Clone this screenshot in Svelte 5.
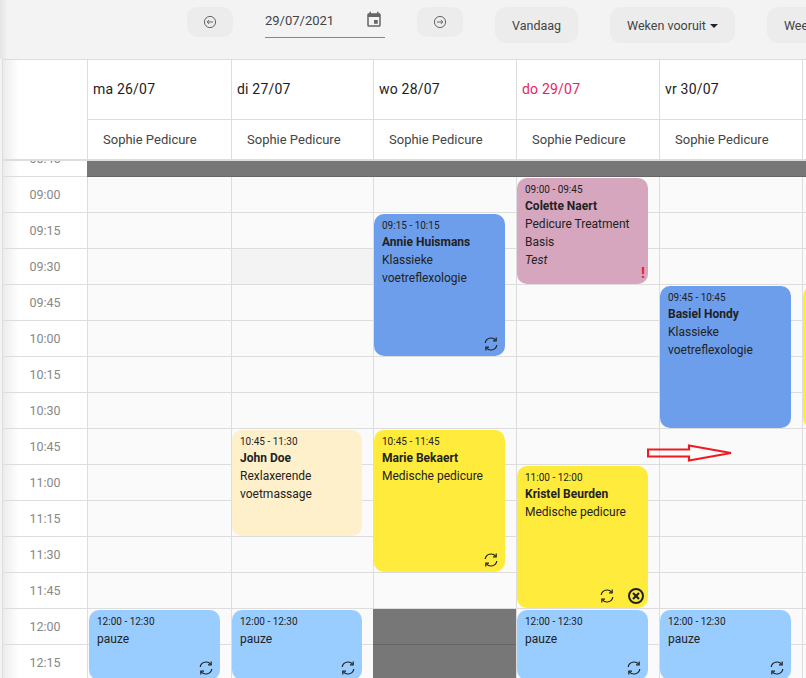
<script lang="ts">
  const times = ["08:45","09:00","09:15","09:30","09:45","10:00","10:15","10:30","10:45","11:00","11:15","11:30","11:45","12:00","12:15"];
  const rowH = 36;

  const pauze = () => ({ from: 13, span: 2, time: "12:00 - 12:30", lines: ["pauze"], color: "#99ccff", sync: true });

  const days = [
    { label: "ma 26/07", res: "Sophie Pedicure", events: [pauze()], blocked: [0] },
    {
      label: "di 27/07",
      res: "Sophie Pedicure",
      blocked: [0],
      light: [3],
      events: [
        { from: 8, span: 3, time: "10:45 - 11:30", name: "John Doe", lines: ["Rexlaxerende", "voetmassage"], color: "#fff0cc" },
        pauze(),
      ],
    },
    {
      label: "wo 28/07",
      res: "Sophie Pedicure",
      blocked: [0, 13, 14],
      events: [
        { from: 2, span: 4, time: "09:15 - 10:15", name: "Annie Huismans", lines: ["Klassieke", "voetreflexologie"], color: "#6d9eeb", sync: true },
        { from: 8, span: 4, time: "10:45 - 11:45", name: "Marie Bekaert", lines: ["Medische pedicure"], color: "#ffeb3b", sync: true },
      ],
    },
    {
      label: "do 29/07",
      res: "Sophie Pedicure",
      today: true,
      blocked: [0],
      events: [
        { from: 1, span: 3, time: "09:00 - 09:45", name: "Colette Naert", lines: ["Pedicure Treatment", "Basis"], note: "Test", color: "#d5a6bd", alert: true },
        { from: 9, span: 4, time: "11:00 - 12:00", name: "Kristel Beurden", lines: ["Medische pedicure"], color: "#ffeb3b", sync: true, cancel: true },
        pauze(),
      ],
    },
    {
      label: "vr 30/07",
      res: "Sophie Pedicure",
      blocked: [0],
      events: [
        { from: 4, span: 4, time: "09:45 - 10:45", name: "Basiel Hondy", lines: ["Klassieke", "voetreflexologie"], color: "#6d9eeb", sync: false },
        pauze(),
      ],
    },
    // next day only peeks in at the right edge
    {
      label: "",
      res: "",
      blocked: [0],
      events: [{ from: 4, span: 4, time: "", name: "", lines: [], color: "#ffeb3b" }],
    },
  ];
</script>

{#snippet syncIcon()}
  <svg class="ico" width="16" height="16" viewBox="0 0 16 16" fill="none" stroke="currentColor" stroke-width="1.2">
    <path d="M2.2 7A5.9 5.9 0 0 1 12.6 4.2" />
    <path d="M13.2 1.6V4.8H10" />
    <path d="M13.8 9A5.9 5.9 0 0 1 3.4 11.8" />
    <path d="M2.8 14.4V11.2H6" />
  </svg>
{/snippet}

<div class="page">
  <div class="toolbar">
    <button class="nav">
      <svg width="14" height="14" viewBox="0 0 14 14" fill="none" stroke="#666" stroke-width="1">
        <circle cx="7" cy="7" r="5.6" />
        <path d="M10 7H4.2M6.2 5 4.2 7l2 2" />
      </svg>
    </button>
    <div class="date">
      <span>29/07/2021</span>
      <svg width="18" height="18" viewBox="0 0 24 24" fill="#666">
        <path d="M17 12h-5v5h5v-5zM16 1v2H8V1H6v2H5c-1.11 0-2 .9-2 2v14a2 2 0 0 0 2 2h14c1.1 0 2-.9 2-2V5c0-1.1-.9-2-2-2h-1V1h-2zm3 18H5V8h14v11z" />
      </svg>
    </div>
    <button class="nav">
      <svg width="14" height="14" viewBox="0 0 14 14" fill="none" stroke="#666" stroke-width="1">
        <circle cx="7" cy="7" r="5.6" />
        <path d="M4 7h5.8M7.8 5l2 2-2 2" />
      </svg>
    </button>
    <button class="btn">Vandaag</button>
    <button class="btn">Weken vooruit<i class="caret"></i></button>
    <button class="btn">Week</button>
  </div>

  <div class="head">
    <div class="corner"></div>
    {#each days as day}
      <div class="head-col">
        <div class="day" class:today={day.today}>{day.label}</div>
        <div class="res">{day.res}</div>
      </div>
    {/each}
  </div>

  <div class="body">
    <div class="rows">
      <div class="gutter">
        {#each times as t}
          <div class="time">{t}</div>
        {/each}
      </div>
      {#each days as day, d}
        <div class="col" class:first={d === 0}>
          {#each times as _, i}
            <div class="slot" class:blocked={day.blocked?.includes(i)} class:light={day.light?.includes(i)}></div>
          {/each}
          {#each day.events as ev}
            <div
              class="event"
              style:top="{ev.from * rowH + 1}px"
              style:height="{ev.span * rowH - 2}px"
              style:background={ev.color}
            >
              <div class="ev-time">{ev.time}</div>
              {#if ev.name}<div class="ev-name">{ev.name}</div>{/if}
              {#each ev.lines as line}
                <div class="ev-line">{line}</div>
              {/each}
              {#if ev.note}<div class="ev-line note">{ev.note}</div>{/if}
              <div class="ev-icons">
                {#if ev.alert}<span class="alert">!</span>{/if}
                {#if ev.sync}{@render syncIcon()}{/if}
                {#if ev.cancel}
                  <svg class="ico cancel" width="18" height="18" viewBox="0 0 18 18" fill="none" stroke="currentColor">
                    <circle cx="9" cy="9" r="7" stroke-width="2" />
                    <path d="M6 6l6 6M12 6l-6 6" stroke-width="2.2" />
                  </svg>
                {/if}
              </div>
            </div>
          {/each}
        </div>
      {/each}
    </div>
    <!-- annotation arrow drawn over the screenshot -->
    <svg class="arrow" width="88" height="20" viewBox="0 0 88 20" fill="none" stroke="#ed1c24" stroke-width="2.2">
      <path d="M1 5.5h41V1.5L84 9 42 16.5v-4H1z" />
    </svg>
  </div>
</div>

<style>
  :global(body) {
    margin: 0;
    font-family: Roboto, "Liberation Sans", sans-serif;
  }

  .page {
    position: relative;
    width: 806px;
    height: 678px;
    overflow: hidden;
    display: flex;
    flex-direction: column;
    background: #f3f3f3;
    --cols: 85px 144px 142px 143px 143px 143px 143px;
  }

  /* ========== Toolbar ========== */
  .toolbar {
    flex: 0 0 59px;
    display: flex;
    align-items: flex-start;
    gap: 32px;
    box-sizing: border-box;
    padding: 7px 0 0 187px;
    white-space: nowrap;
    background: linear-gradient(to right, #e4e4e4, #f3f3f3 8px);
  }

  .toolbar button {
    flex-shrink: 0;
    border: none;
    background: #ececec;
    color: #444;
    font: 400 12.5px Roboto, sans-serif;
  }

  .nav {
    width: 46px;
    height: 30px;
    padding: 0;
    border-radius: 10px;
    display: flex;
    align-items: center;
    justify-content: center;
  }

  .btn {
    height: 36px;
    padding: 0 17px;
    border-radius: 11px;
  }

  .caret {
    display: inline-block;
    margin-left: 4px;
    vertical-align: 2px;
    border-top: 4px solid #222;
    border-left: 4px solid transparent;
    border-right: 4px solid transparent;
  }

  .date {
    flex-shrink: 0;
    width: 120px;
    height: 31px;
    box-sizing: border-box;
    border-bottom: 1px solid #888;
    display: flex;
    justify-content: space-between;
    align-items: flex-start;
    padding-top: 6px;
    font-size: 13px;
    line-height: 16px;
    color: #444;
  }

  .date svg {
    margin: -2px 2px 0 0;
  }

  /* ========== Header ========== */
  .head {
    flex-shrink: 0;
    margin-left: 2px;
    display: grid;
    grid-template-columns: var(--cols);
    background: #fff;
    border-top: 1px solid #ddd;
    border-bottom: 2px solid #ddd;
    height: 102px;
    box-sizing: border-box;
  }

  .corner {
    border-left: 1px solid #ddd;
    background: linear-gradient(to right, #ececec, #fff 16px);
  }

  .head-col {
    border-left: 1px solid #ddd;
    overflow: hidden;
  }

  .day {
    height: 60px;
    box-sizing: border-box;
    border-bottom: 1px solid #ddd;
    padding-left: 5px;
    font-size: 14px;
    font-weight: 400;
    line-height: 58px;
    color: #1c1c1c;
    letter-spacing: 0.2px;
    white-space: nowrap;
  }

  .day.today {
    color: #e91e63;
  }

  .res {
    font-size: 13px;
    line-height: 39px;
    color: #444;
    padding-left: 15px;
    white-space: nowrap;
  }

  /* ========== Grid ========== */
  .body {
    flex: 1;
    min-height: 0;
    overflow: hidden;
    position: relative;
    margin-left: 2px;
    background: #fafafa;
  }

  .rows {
    margin-top: -20px;
    display: grid;
    grid-template-columns: var(--cols);
  }

  .gutter {
    border-left: 1px solid #ddd;
    background: linear-gradient(to right, #ececec, #fff 16px);
  }

  .time {
    height: 36px;
    box-sizing: border-box;
    border-bottom: 1px solid #ddd;
    font-size: 12.5px;
    line-height: 35px;
    text-align: center;
    color: #888;
  }

  .col {
    position: relative;
    border-left: 1px solid #ddd;
  }

  .slot {
    height: 36px;
    box-sizing: border-box;
    border-bottom: 1px solid #ddd;
  }

  .slot.light {
    background: #f3f3f3;
  }

  .slot.blocked {
    background: #777;
    border-bottom-color: #666;
    margin-left: -1px;
  }

  .event {
    position: absolute;
    left: 0;
    right: 11px;
    box-sizing: border-box;
    padding: 3px 8px;
    border-radius: 10px;
    color: #222;
    font-size: 12px;
    line-height: 18px;
  }

  .col.first .event {
    left: 1px;
  }

  .ev-time {
    font-size: 10px;
    line-height: 17px;
  }

  .ev-name {
    font-weight: 700;
    line-height: 17px;
  }

  .ev-line {
    white-space: nowrap;
  }

  .note {
    font-style: italic;
  }

  .ev-icons {
    position: absolute;
    right: 6px;
    bottom: 3px;
    display: flex;
    align-items: center;
    gap: 12px;
    height: 18px;
    color: #222;
  }

  .ico {
    display: block;
  }

  .cancel {
    margin-right: -3px;
  }

  .alert {
    color: #f01c3c;
    font-size: 15px;
    font-weight: 700;
    line-height: 18px;
    margin: 0 -3px -2px 0;
  }

  .arrow {
    position: absolute;
    left: 645px;
    top: 283px;
  }
</style>
